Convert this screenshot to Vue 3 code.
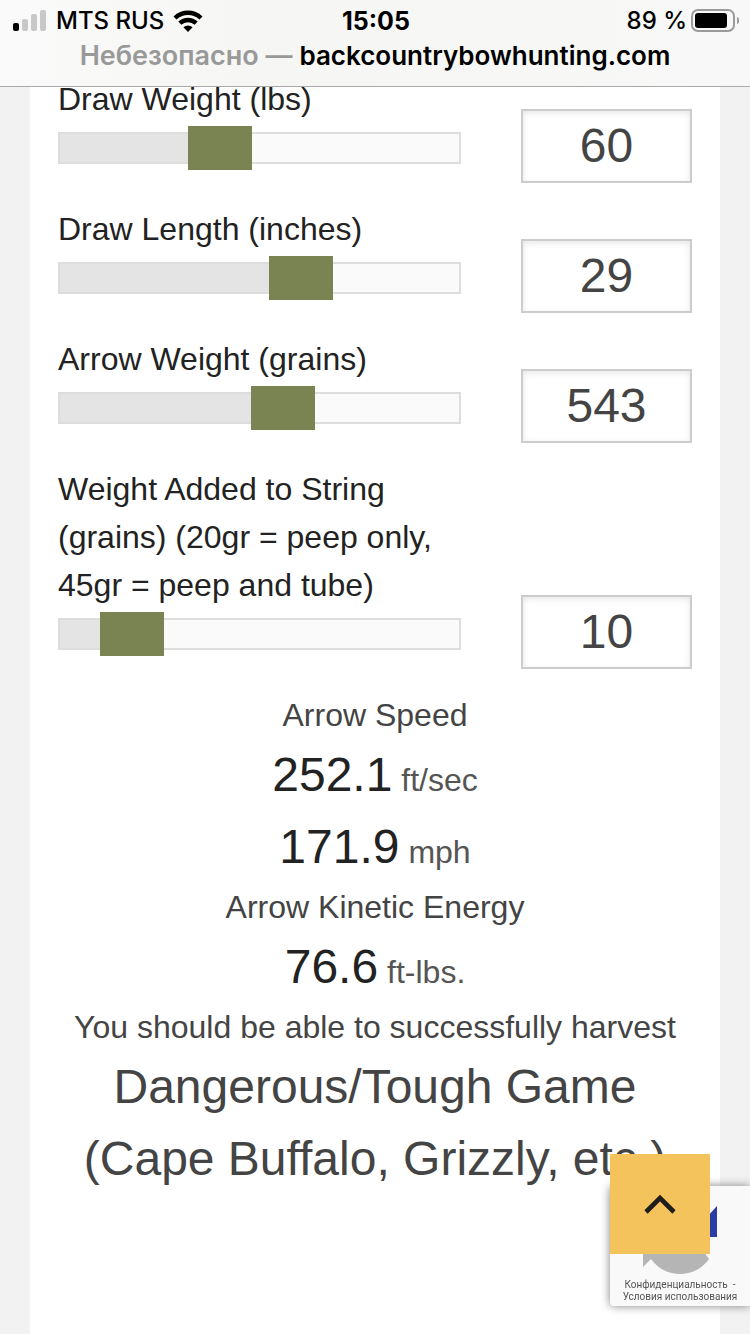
<script setup>
import { reactive } from 'vue'

const fields = reactive([
  { id: 'draw-weight', label: 'Draw Weight (lbs)', value: 60, min: 29, max: 110 },
  { id: 'draw-length', label: 'Draw Length (inches)', value: 29, min: 24, max: 32 },
  { id: 'arrow-weight', label: 'Arrow Weight (grains)', value: 543, min: 258, max: 758 },
  {
    id: 'string-weight',
    label: 'Weight Added to String (grains) (20gr = peep only, 45gr = peep and tube)',
    value: 10,
    min: 0,
    max: 84
  }
])

const fill = (f) => ((f.value - f.min) / (f.max - f.min)) * 100 + '%'
const toTop = () => window.scrollTo({ top: 0, behavior: 'smooth' })
</script>

<template>
  <div class="page">
    <header class="browser-bar">
      <div class="status">
        <div class="carrier">
          <svg width="34" height="22" viewBox="0 0 34 22" aria-hidden="true">
            <rect x="0" y="13" width="6" height="8" rx="2" fill="#000" />
            <rect x="9" y="9" width="6" height="12" rx="2" fill="#c8c8c8" />
            <rect x="18" y="4" width="6" height="17" rx="2" fill="#c8c8c8" />
            <rect x="27" y="0" width="6" height="21" rx="2" fill="#c8c8c8" />
          </svg>
          <span>MTS RUS</span>
          <svg class="wifi" width="30" height="22" viewBox="0 0 30 22" aria-hidden="true">
            <g fill="none" stroke="#000" stroke-width="4.4">
              <path d="M2 8a18.8 18.8 0 0 1 26 0" />
              <path d="M6.8 13.2a12 12 0 0 1 16.4 0" />
            </g>
            <path d="M10.4 17.2a7 7 0 0 1 9.2 0L15 22z" fill="#000" />
          </svg>
        </div>
        <time class="clock">15:05</time>
        <div class="power">
          <span>89 %</span>
          <svg width="48" height="24" viewBox="0 0 48 24" aria-hidden="true">
            <rect x="1" y="1" width="42" height="21" rx="6" fill="none" stroke="#9b9b9b" stroke-width="2" />
            <rect x="4" y="4" width="32" height="15" rx="3" fill="#000" />
            <path d="M46 8c3 1 3 6 0 7z" fill="#9b9b9b" />
          </svg>
        </div>
      </div>
      <div class="address"><span class="insecure">Небезопасно — </span>backcountrybowhunting.com</div>
    </header>

    <main class="sheet">
      <form class="fields" @submit.prevent>
        <div v-for="f in fields" :key="f.id" class="field">
          <div class="control">
            <label :for="f.id">{{ f.label }}</label>
            <input
              :id="f.id"
              v-model.number="f.value"
              class="slider"
              type="range"
              step="any"
              :min="f.min"
              :max="f.max"
              :style="{ '--fill': fill(f) }"
            />
          </div>
          <input v-model="f.value" class="amount" type="text" inputmode="numeric" :aria-label="f.label" />
        </div>
      </form>

      <section class="results">
        <p>Arrow Speed</p>
        <p class="figure"><b>252.1</b> <span>ft/sec</span></p>
        <p class="figure"><b>171.9</b> <span>mph</span></p>
        <p>Arrow Kinetic Energy</p>
        <p class="figure"><b>76.6</b> <span>ft-lbs.</span></p>
        <p>You should be able to successfully harvest</p>
        <p class="game">Dangerous/Tough Game<br />(Cape Buffalo, Grizzly, etc.)</p>
      </section>
    </main>

    <aside class="captcha">
      <svg width="140" height="92" viewBox="0 0 140 92" aria-hidden="true">
        <path d="M107 20v31H77l10-10a23 23 0 0 0-34 0L43 31a38 38 0 0 1 54 0z" fill="#2a3ca5" />
        <path d="M33 50h30l-9 9c9 11 26 12 35 0l10 14c-14 20-44 20-58 0l-8 8z" fill="#b5b5b5" />
      </svg>
      <div class="terms">
        <a href="#privacy">Конфиденциальность</a><span>&nbsp; -</span><br />
        <a href="#terms">Условия использования</a>
      </div>
    </aside>
    <button class="to-top" type="button" aria-label="Back to top" @click="toTop">
      <svg width="32" height="20" viewBox="0 0 32 20" aria-hidden="true">
        <path d="M2 18L16 4l14 14" fill="none" stroke="#1e1e1e" stroke-width="4.6" />
      </svg>
    </button>
  </div>
</template>

<style>
body {
  background: #f2f2f2;
}
</style>

<style scoped>
.page {
  min-height: 100vh;
  display: flex;
  flex-direction: column;
  font-family: "Liberation Sans", Arial, sans-serif;
  font-size: 32px;
  line-height: 48px;
  color: #444;
}
.browser-bar {
  position: sticky;
  top: 0;
  z-index: 2;
  box-sizing: border-box;
  height: 87px;
  padding-top: 5px;
  background: linear-gradient(90deg, #fafafa, #f6f6f4 35%, #f8f8f8);
  border-bottom: 1px solid #a9a9a9;
  font-family: Inter, sans-serif;
  color: #000;
}
.status {
  display: grid;
  grid-template-columns: 1fr auto 1fr;
  align-items: center;
  height: 32px;
  padding: 0 11px 0 13px;
  font-size: 24px;
  line-height: 32px;
  font-weight: 500;
}
.carrier,
.power {
  display: flex;
  align-items: center;
  gap: 8px;
}
.carrier {
  gap: 9px;
}
.power {
  justify-content: flex-end;
  gap: 4px;
}
.clock {
  font-size: 25px;
  font-weight: 700;
}
.address {
  font-size: 26px;
  line-height: 38px;
  font-weight: 600;
  text-align: center;
  white-space: nowrap;
}
.insecure {
  font-size: 27px;
  color: #999;
}
.sheet {
  flex: 1;
  margin: -12px 30px 0;
  padding: 0 28px;
  background: #fff;
}
.field {
  display: grid;
  grid-template-columns: 1fr 171px;
  column-gap: 60px;
  align-items: end;
  padding-bottom: 22px;
}
.control {
  display: flex;
  flex-direction: column;
  gap: 3px;
  padding-bottom: 13px;
  color: #222;
}
.slider {
  appearance: none;
  width: 100%;
  height: 44px;
  margin: 0;
  background: transparent;
}
.slider::-webkit-slider-runnable-track {
  box-sizing: border-box;
  height: 32px;
  border: 2px solid #ddd;
  background: linear-gradient(#e4e4e4, #e4e4e4) 0 0 / var(--fill) 100% no-repeat #fafafa;
}
.slider::-webkit-slider-thumb {
  appearance: none;
  width: 64px;
  height: 44px;
  margin-top: -8px;
  background: #7a8452;
}
.amount {
  box-sizing: border-box;
  width: 100%;
  height: 74px;
  padding: 0 0 2px;
  border: 2px solid #ccc;
  border-radius: 0;
  background: #fff;
  box-shadow: inset 0 2px 6px rgba(0, 0, 0, 0.1);
  font: 48px "Liberation Sans", Arial, sans-serif;
  text-align: center;
  color: #444;
}
.results {
  text-align: center;
}
.results p {
  margin: 0;
}
.figure {
  white-space: nowrap;
}
.figure b {
  font-size: 48px;
  line-height: 72px;
  font-weight: 400;
  color: #222;
}
.figure span {
  color: #555;
}
.game {
  font-size: 48px;
  line-height: 72px;
}
.captcha {
  position: fixed;
  right: 0;
  bottom: 28px;
  width: 140px;
  height: 120px;
  border-radius: 4px 0 0 4px;
  background: #f9f9f9;
  box-shadow: 0 0 10px #808080;
}
.captcha svg {
  display: block;
}
.terms {
  padding-top: 1px;
  font: 10px/12px Roboto, sans-serif;
  text-align: center;
  white-space: nowrap;
  color: #555;
}
.terms a {
  color: inherit;
  text-decoration: none;
}
.to-top {
  position: fixed;
  right: 40px;
  bottom: 80px;
  display: grid;
  place-items: center;
  width: 100px;
  height: 100px;
  padding: 0;
  border: 0;
  background: #f5c35b;
}
</style>
